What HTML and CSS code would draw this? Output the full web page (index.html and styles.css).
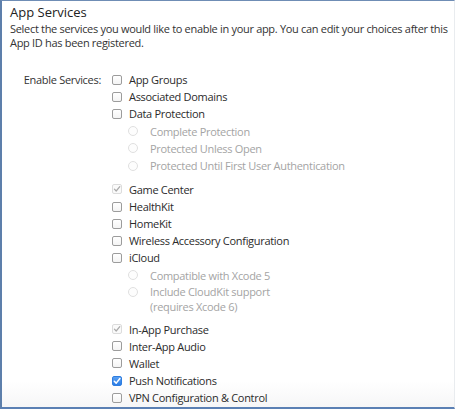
FILE: index.html
```html
<!DOCTYPE html>
<html>
<head>
<meta charset="utf-8">
<link rel="stylesheet" href="styles.css">
</head>
<body>
<div class="frame">
  <h1 class="title">App Services</h1>
  <p class="desc">Select the services you would like to enable in your app. You can edit your choices after this App ID has been registered.</p>
  <div class="form">
    <div class="form-label">Enable Services:</div>
    <div class="services">
      <div class="row"><span class="cb"></span><span class="lbl">App Groups</span></div>
      <div class="row"><span class="cb"></span><span class="lbl">Associated Domains</span></div>
      <div class="row"><span class="cb"></span><span class="lbl">Data Protection</span></div>
      <div class="sub">
        <div class="row"><span class="radio"></span><span class="lbl dim">Complete Protection</span></div>
        <div class="row"><span class="radio"></span><span class="lbl dim">Protected Unless Open</span></div>
        <div class="row"><span class="radio"></span><span class="lbl dim">Protected Until First User Authentication</span></div>
      </div>
      <div class="row group-start"><span class="cb locked"><svg viewBox="0 0 10 10"><path d="M2.4 5.2 L4.2 7 L7.8 2.6" /></svg></span><span class="lbl">Game Center</span></div>
      <div class="row"><span class="cb"></span><span class="lbl">HealthKit</span></div>
      <div class="row"><span class="cb"></span><span class="lbl">HomeKit</span></div>
      <div class="row"><span class="cb"></span><span class="lbl">Wireless Accessory Configuration</span></div>
      <div class="row"><span class="cb"></span><span class="lbl">iCloud</span></div>
      <div class="sub">
        <div class="row"><span class="radio"></span><span class="lbl dim">Compatible with Xcode 5</span></div>
        <div class="row wrap"><span class="radio"></span><span class="lbl dim">Include CloudKit support<br>(requires Xcode 6)</span></div>
      </div>
      <div class="row group-start2"><span class="cb locked"><svg viewBox="0 0 10 10"><path d="M2.4 5.2 L4.2 7 L7.8 2.6" /></svg></span><span class="lbl">In-App Purchase</span></div>
      <div class="row"><span class="cb"></span><span class="lbl">Inter-App Audio</span></div>
      <div class="row"><span class="cb"></span><span class="lbl">Wallet</span></div>
      <div class="row"><span class="cb on"><svg viewBox="0 0 10 10"><path d="M2.3 5.2 L4.2 7.1 L7.9 2.5" /></svg></span><span class="lbl">Push Notifications</span></div>
      <div class="row"><span class="cb"></span><span class="lbl">VPN Configuration &amp; Control</span></div>
    </div>
  </div>
</div>
</body>
</html>
```

FILE: styles.css
```css
html, body {
  margin: 0;
  padding: 0;
  background: #fff;
}

.frame {
  box-sizing: border-box;
  width: 455px;
  height: 409px;
  border-left: 2px solid #5d7fab;
  border-top: 1px solid #6f8db5;
  border-bottom: 2px solid #5b80b4;
  border-right: 1px solid #e9ecef;
  padding: 2.5px 0 0 8px;
  font-family: "Open Sans", "Liberation Sans", sans-serif;
  color: #333;
  background: linear-gradient(to bottom, #fff 0, #fff 380px, #f6f6f7 406px);
  overflow: hidden;
}

.title {
  margin: 0;
  font-size: 13px;
  line-height: 16px;
  font-weight: normal;
  color: #222;
}

.desc {
  margin: 2.3px 0 0 0;
  font-size: 11px;
  line-height: 14.5px;
  letter-spacing: -0.31px;
  color: #333;
}

.form {
  display: flex;
  margin-top: 20.3px;
  margin-left: -8px;
  font-size: 11px;
  letter-spacing: -0.3px;
}

.form-label {
  width: 99px;
  text-align: right;
  line-height: 17.2px;
  color: #333;
}

.services {
  margin-left: 11px;
  display: flex;
  flex-direction: column;
}

.row {
  display: flex;
  align-items: center;
  line-height: 17.2px;
  height: 17.2px;
}

.lbl {
  margin-left: 7px;
  color: #2b2b2b;
  white-space: nowrap;
}

.lbl.dim {
  color: #a4a4a4;
  margin-left: 12px;
}

.sub {
  margin-left: 16px;
}

.row.wrap {
  height: auto;
  align-items: flex-start;
}

.row.wrap .lbl {
  line-height: 14.6px;
  padding-top: 1.3px;
}

.row.wrap .radio {
  margin-top: 3.6px;
}

.group-start {
  margin-top: 6.5px;
}

.group-start2 {
  margin-top: 6.2px;
}

.cb {
  box-sizing: border-box;
  width: 10px;
  height: 10px;
  border: 1px solid #9c9c9c;
  border-radius: 2px;
  background: linear-gradient(#fff, #f4f4f4);
  flex: none;
  display: flex;
  align-items: center;
  justify-content: center;
}

.cb svg {
  width: 10px;
  height: 10px;
  flex: none;
}

.cb svg path {
  fill: none;
  stroke-width: 1.2;
  stroke-linecap: round;
  stroke-linejoin: round;
}

.cb.locked {
  border-color: #dcdcdc;
  background: #fafafa;
}

.cb.locked svg path {
  stroke: #a9a9a9;
}

.cb.on {
  border-color: #2f7ee0;
  background: linear-gradient(#5aa0f2, #2a7ce6);
}

.cb.on svg path {
  stroke: #fff;
  stroke-width: 1.5;
}

.radio {
  box-sizing: border-box;
  width: 10px;
  height: 10px;
  border: 1px solid #e0e0e0;
  border-radius: 50%;
  background: #fdfdfd;
  flex: none;
}
```
